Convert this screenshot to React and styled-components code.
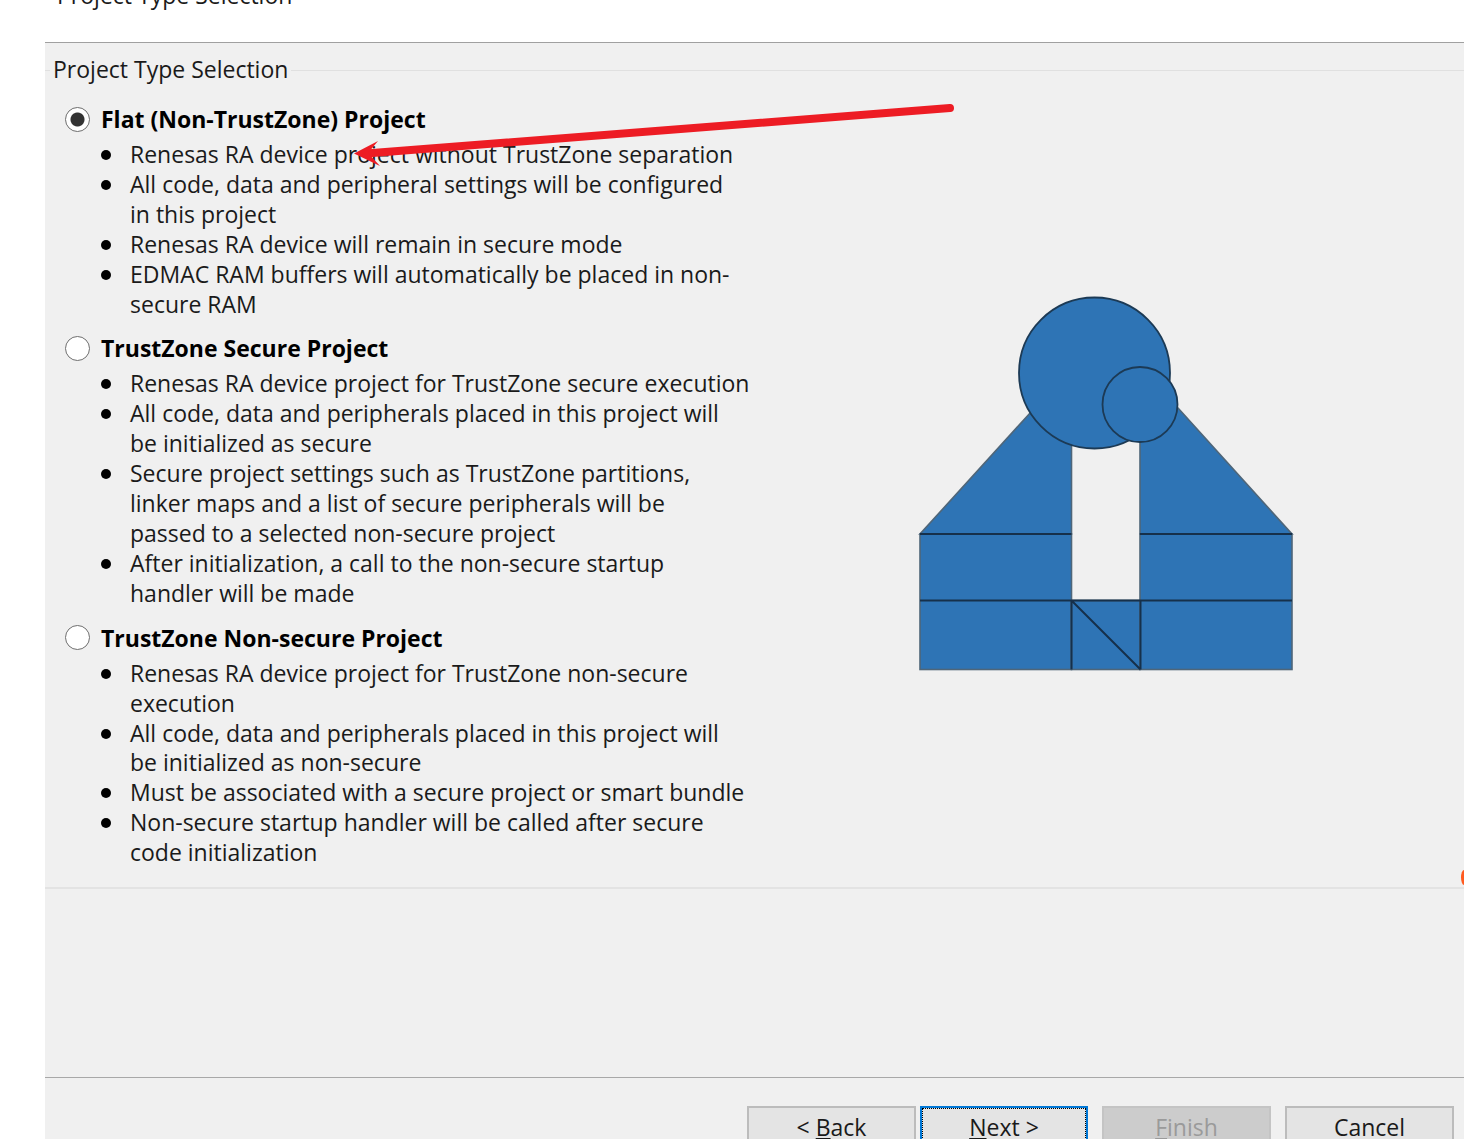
import React from 'react';
import styled, { createGlobalStyle } from 'styled-components';

const projectGroups = [
    {
        title: 'Flat (Non-TrustZone) Project',
        selected: true,
        bullets: [
            ['Renesas RA device project without TrustZone separation'],
            ['All code, data and peripheral settings will be configured', 'in this project'],
            ['Renesas RA device will remain in secure mode'],
            ['EDMAC RAM buffers will automatically be placed in non-', 'secure RAM'],
        ],
    },
    {
        title: 'TrustZone Secure Project',
        bullets: [
            ['Renesas RA device project for TrustZone secure execution'],
            ['All code, data and peripherals placed in this project will', 'be initialized as secure'],
            ['Secure project settings such as TrustZone partitions,', 'linker maps and a list of secure peripherals will be', 'passed to a selected non-secure project'],
            ['After initialization, a call to the non-secure startup', 'handler will be made'],
        ],
    },
    {
        title: 'TrustZone Non-secure Project',
        bullets: [
            ['Renesas RA device project for TrustZone non-secure', 'execution'],
            ['All code, data and peripherals placed in this project will', 'be initialized as non-secure'],
            ['Must be associated with a secure project or smart bundle'],
            ['Non-secure startup handler will be called after secure', 'code initialization'],
        ],
    },
];

function TrustZoneDiagram() {
    return (
        <svg width="376" height="376" viewBox="918 296 376 376">
            <g fill="#2e74b5" stroke="#4f6679" strokeWidth="1.6">
                <path d="M1031 412 L920 534 H1071.5 V412 Z" />
                <path d="M1178 408 L1292 534 H1140 V408 Z" />
                <rect x="920" y="534" width="151.5" height="135.5" />
                <rect x="1140" y="534" width="152" height="135.5" />
                <rect x="1071.5" y="600.5" width="68.5" height="69" />
            </g>
            <path d="M920 534 H1071.5 M1140 534 H1292 M920 600.5 H1292 M1071.5 600.5 V669.5 M1140.5 600.5 V669.5 M1071.5 600.5 L1140.5 669.5" fill="none" stroke="#16304a" strokeWidth="2" />
            <g fill="#2e74b5" stroke="#1c3a55" strokeWidth="1.8">
                <circle cx="1094.5" cy="373" r="75.5" />
                <circle cx="1140" cy="404.5" r="37.5" />
            </g>
        </svg>
    );
}

function RedArrow() {
    return (
        <ArrowOverlay width="620" height="80" viewBox="345 95 620 80">
            <path d="M950 108 L366 153.5" fill="none" stroke="#ed1c24" strokeWidth="8" strokeLinecap="round" />
            <path d="M354 153.5 L378 141 L368 153 L380 166 Z" fill="#ed1c24" />
        </ArrowOverlay>
    );
}

function App() {
    return (
        <Page>
            <GlobalStyle />
            <Header>
                <HeaderTitle>Project Type Selection</HeaderTitle>
            </Header>
            <Panel>
                <GroupBox>
                    <Legend>
                        <LegendTick />
                        <LegendText>Project Type Selection</LegendText>
                        <LegendLine />
                    </Legend>
                    <GroupBody>
                        <OptionsColumn>
                            {projectGroups.map((group) => (
                                <Option key={group.title}>
                                    <OptionTitle>
                                        <Radio selected={group.selected} />
                                        {group.title}
                                    </OptionTitle>
                                    <BulletList>
                                        {group.bullets.map((lines) => (
                                            <Bullet key={lines[0]}>
                                                {lines.map((line, i) => (
                                                    <BulletLine key={i}>{line}</BulletLine>
                                                ))}
                                            </Bullet>
                                        ))}
                                    </BulletList>
                                </Option>
                            ))}
                        </OptionsColumn>
                        <DiagramColumn>
                            <TrustZoneDiagram />
                        </DiagramColumn>
                    </GroupBody>
                </GroupBox>
                <Spacer />
                <Footer>
                    <ButtonPair>
                        <Button>&lt; <u>B</u>ack</Button>
                        <Button focused>
                            <u>N</u>ext &gt;
                        </Button>
                    </ButtonPair>
                    <Button disabled>
                        <u>F</u>inish
                    </Button>
                    <Button>Cancel</Button>
                </Footer>
            </Panel>
            <RedArrow />
            <EdgeMark />
        </Page>
    );
}

const GlobalStyle = createGlobalStyle`
    html, body {
        margin: 0;
        padding: 0;
        background: #ffffff;
    }
`

const Page = styled.div`
    position: relative;
    width: 1464px;
    height: 1146px;
    overflow: hidden;
    box-sizing: border-box;
    padding: 0 0 7px 45px;
    display: flex;
    flex-direction: column;
    background: #ffffff;
    font-family: "Open Sans", "Liberation Sans", sans-serif;
    font-size: 23px;
    color: #1a1a1a;
`

const Header = styled.div`
    height: 42px;
    flex: none;
    overflow: hidden;
    padding-left: 12px;
`

const HeaderTitle = styled.div`
    margin-top: -20px;
    line-height: 30px;
`

const Panel = styled.div`
    flex: 1;
    min-height: 0;
    overflow: hidden;
    display: flex;
    flex-direction: column;
    background: #f0f0f0;
    border-top: 1px solid #a0a0a0;
`

const GroupBox = styled.div`
    height: 846px;
    flex: none;
    box-sizing: border-box;
    border-bottom: 2px solid #e3e3e3;
`

const Legend = styled.div`
    display: flex;
    align-items: center;
    height: 54px;
`

const LegendTick = styled.div`
    width: 5px;
    height: 1px;
    margin-right: 3px;
    background: #e0e0e0;
`

const LegendText = styled.div`
    line-height: 30px;
    margin-bottom: 2px;
`

const LegendLine = styled.div`
    flex: 1;
    height: 1px;
    margin-left: 3px;
    background: #e0e0e0;
`

const GroupBody = styled.div`
    display: flex;
`

const OptionsColumn = styled.div`
    width: 873px;
    flex: none;
    padding: 7px 0 0 20px;
    box-sizing: border-box;
`

const Option = styled.div`
    margin-bottom: 14px;
`

const OptionTitle = styled.div`
    display: flex;
    align-items: center;
    gap: 11px;
    height: 30px;
    margin-bottom: 6px;
    font-weight: 700;
    color: #000000;
`

const Radio = styled.span`
    width: 25px;
    height: 25px;
    flex: none;
    box-sizing: border-box;
    border-radius: 50%;
    border: 1.5px solid #6e6e6e;
    background: ${(props) => (props.selected
        ? 'radial-gradient(circle, #333333 0 6.5px, #ffffff 7.5px)'
        : '#ffffff')};
`

const BulletList = styled.ul`
    margin: 0;
    padding: 0;
    list-style: none;
`

const Bullet = styled.li`
    position: relative;
    padding-left: 65px;
    line-height: 29.9px;
    &::before {
        content: '';
        position: absolute;
        left: 36px;
        top: 10px;
        width: 10px;
        height: 10px;
        border-radius: 50%;
        background: #000000;
    }
`

const BulletLine = styled.div`
    white-space: nowrap;
`

const DiagramColumn = styled.div`
    padding-top: 199px;
`

const Spacer = styled.div`
    height: 188px;
    flex: none;
    border-bottom: 1px solid #a8a8a8;
`

const Footer = styled.div`
    display: flex;
    justify-content: flex-end;
    gap: 14px;
    padding: 28px 10px 0 0;
`

const ButtonPair = styled.div`
    display: flex;
    gap: 4px;
`

const Button = styled.button`
    width: ${(props) => (props.focused ? '168px' : '169px')};
    height: 42px;
    flex: none;
    box-sizing: border-box;
    padding: 0;
    font: inherit;
    color: ${(props) => (props.disabled ? '#9a9a9a' : '#1a1a1a')};
    background: ${(props) => (props.disabled ? '#cccccc' : '#e4e4e4')};
    border: ${(props) => (props.focused ? '2px solid #0078d7' : `2px solid ${props.disabled ? '#c4c4c4' : '#bcbcbc'}`)};
    outline: ${(props) => (props.focused ? '1px dotted #000000' : 'none')};
    outline-offset: -3px;
`

const ArrowOverlay = styled.svg`
    position: absolute;
    left: 345px;
    top: 95px;
`

const EdgeMark = styled.div`
    position: absolute;
    right: -3px;
    top: 870px;
    width: 6px;
    height: 15px;
    border-radius: 50%;
    background: #ff5a1f;
`

export default App;
